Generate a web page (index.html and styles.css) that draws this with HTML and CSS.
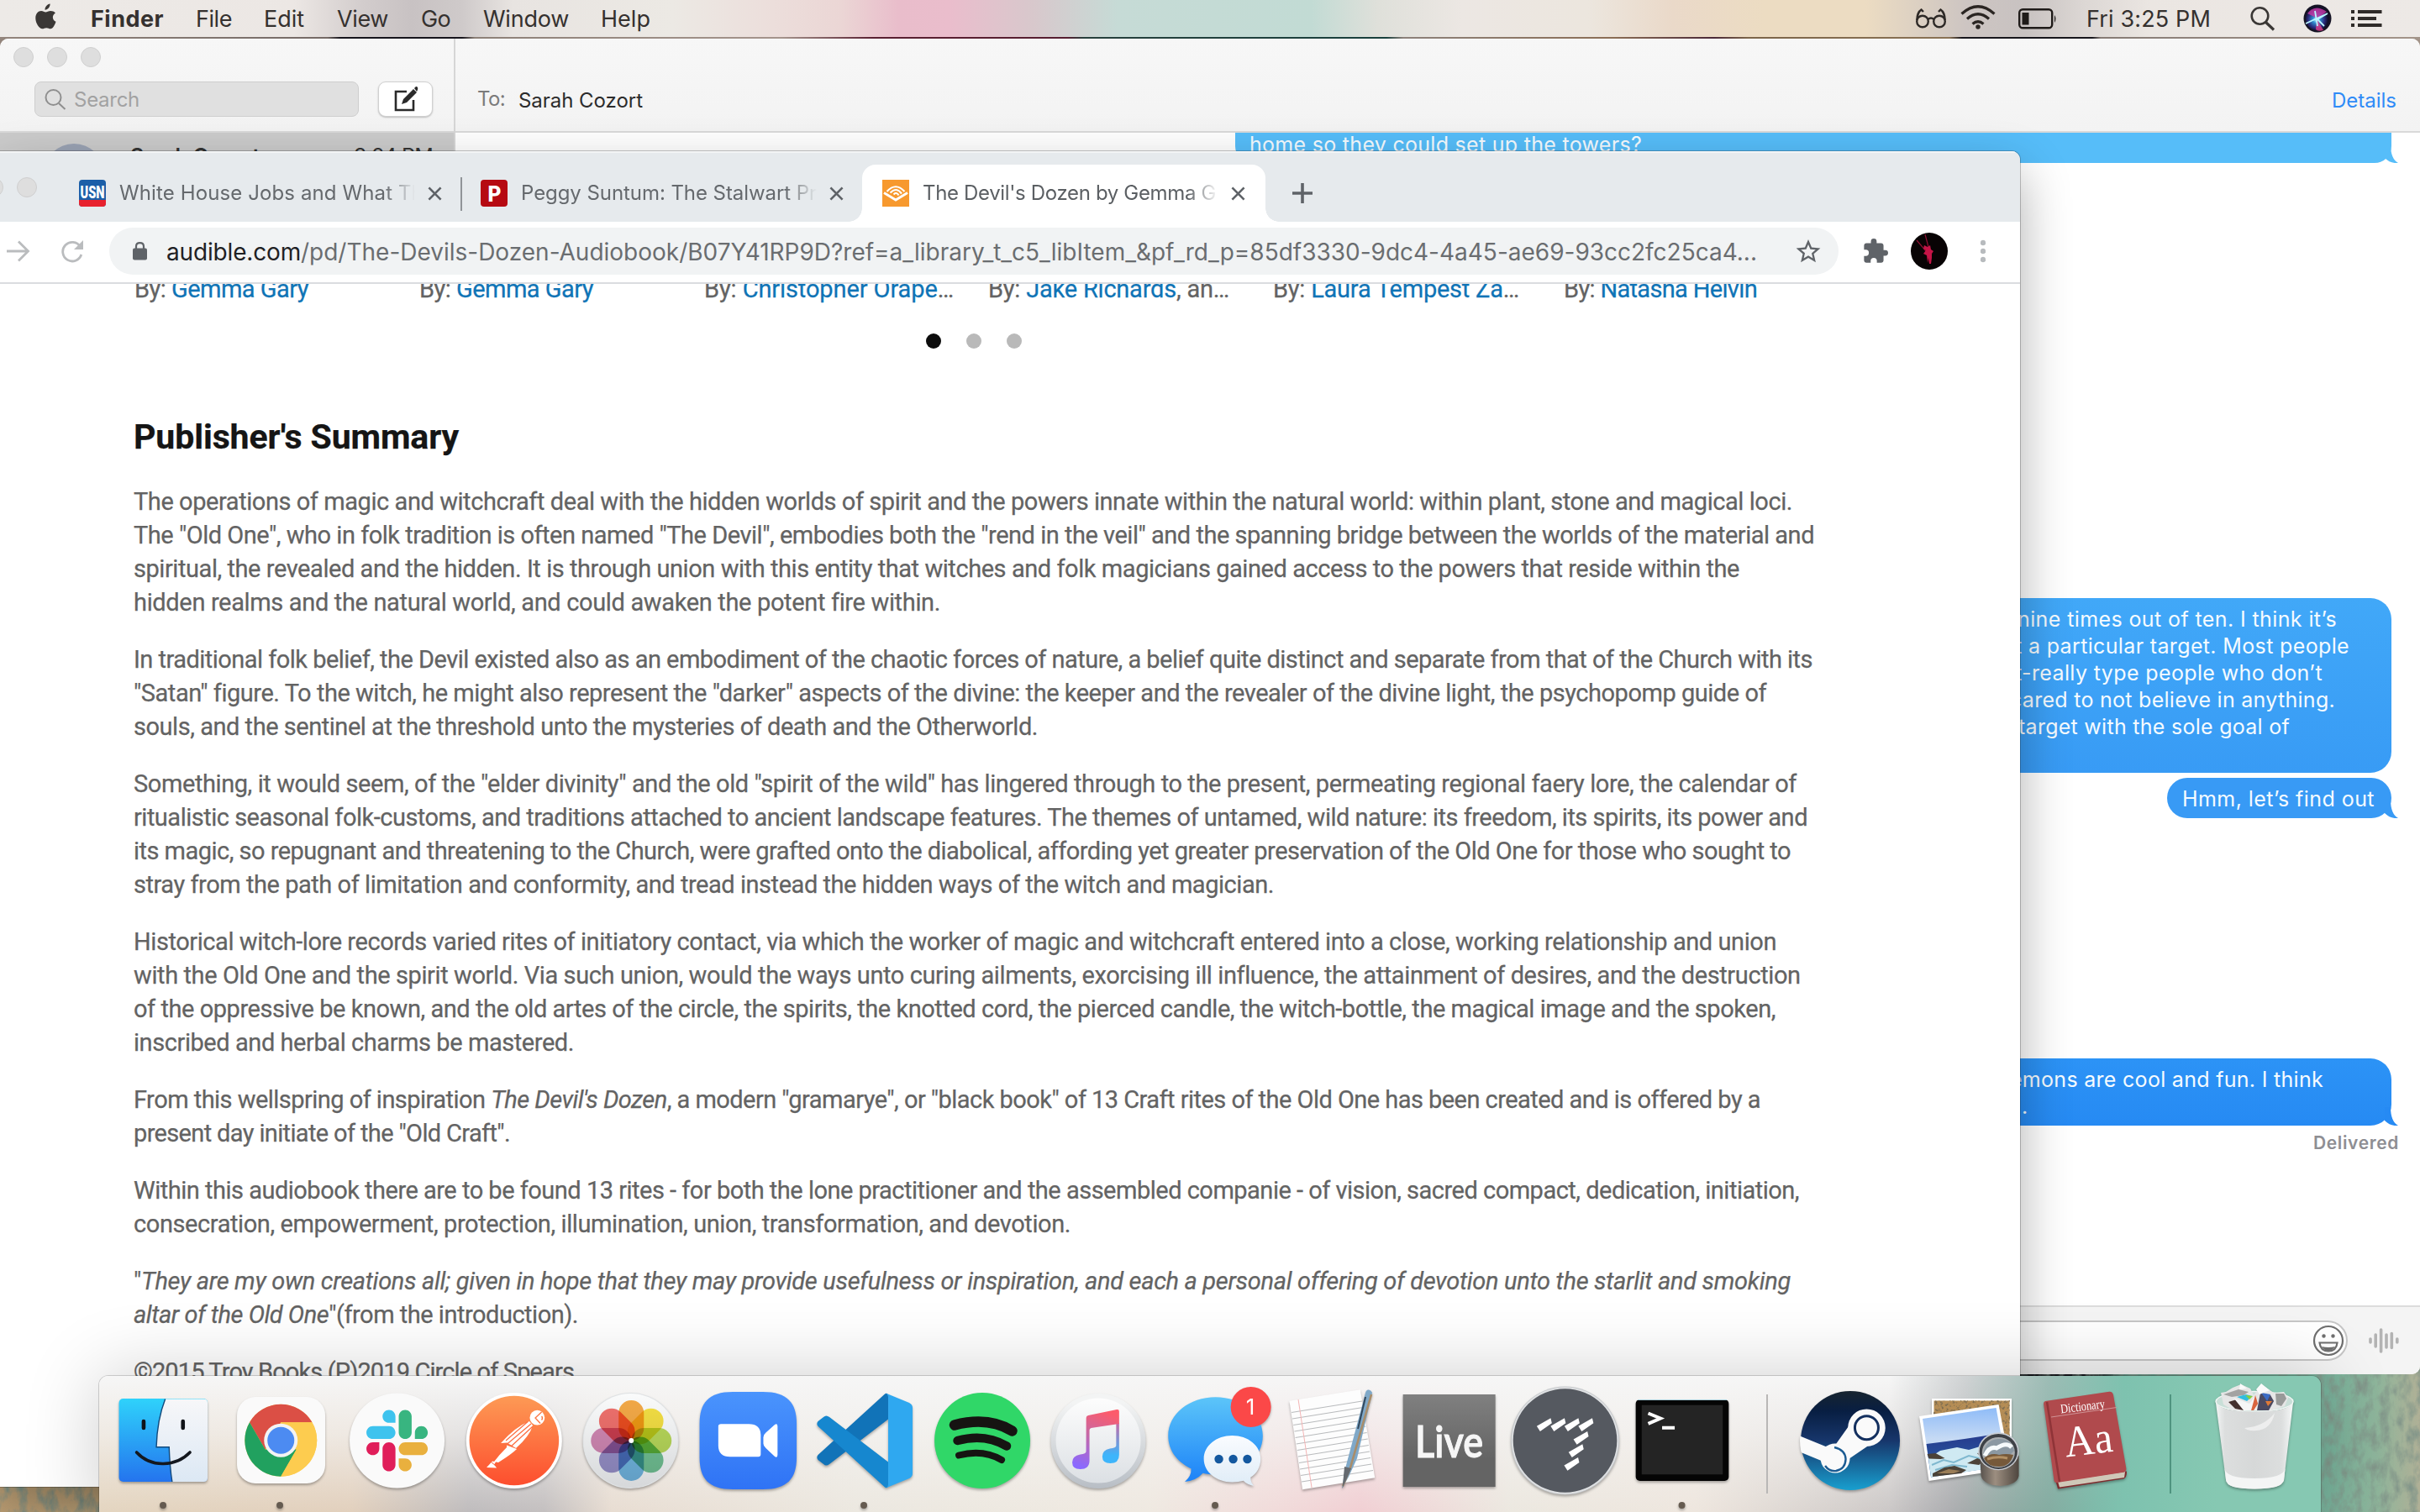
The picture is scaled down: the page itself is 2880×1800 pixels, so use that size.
FILE: index.html
```html
<!DOCTYPE html>
<html lang="en">
<head>
<meta charset="utf-8">
<title>Desktop</title>
<link rel="stylesheet" href="styles.css">
</head>
<body>
<div class="desktop">
  <svg class="grain" width="2880" height="180"><filter id="grain"><feTurbulence type="fractalNoise" baseFrequency=".09 .05" numOctaves="4" seed="4"/><feColorMatrix values="0 0 0 0 .22  0 0 0 0 .3  0 0 0 0 .25  2.200 0 0 0 -.85"/></filter><rect width="2880" height="180" filter="url(#grain)"/></svg>

  <header class="menubar">
    <svg class="apple" viewBox="0 0 26 32"><path fill="#3a3735" d="M18.3 0c.3 3.800-2.900 7.600-6.300 7.400C11.700 3.900 15 .3 18.300 0zM24.900 11.200c-2 1.300-3.200 3-3.200 5.200 0 2.600 1.500 4.600 3.800 5.600-1 3.200-3.600 8.900-6.700 8.900-1.800 0-2.700-1.200-5-1.200s-3.300 1.200-5 1.200C4.600 30.900.3 23.500.3 17.600c0-5.500 3.400-8.800 7-8.800 2.300 0 4 1.500 5.500 1.500 1.400 0 3.500-1.600 6.300-1.600 2 0 4.300.8 5.800 2.500z"/></svg>
    <nav class="menus">
      <b><span data-width="87">Finder</span></b><span class="m"><span data-width="43">File</span></span><span class="m"><span data-width="48">Edit</span></span><span class="m"><span data-width="61">View</span></span><span class="m"><span data-width="35">Go</span></span><span class="m"><span data-width="102">Window</span></span><span class="m"><span data-width="59">Help</span></span>
    </nav>
    <div class="status">
      <svg width="38" height="24" viewBox="0 0 38 24" fill="none" stroke="#2d2926" stroke-width="2.400"><circle cx="9" cy="15.500" r="6.800"/><circle cx="29" cy="15.500" r="6.800"/><path d="M15.500 13q3.500-3 7 0M2.300 14C2.500 8 5 3 7.500 1.500L10 4M35.700 14C35.500 8 33 3 30.500 1.500L28 4"/></svg>
      <svg width="42" height="30" viewBox="0 0 42 30" fill="none" stroke="#2a2522" stroke-width="3.200"><path d="M1.500 10.500Q21-7 40.500 10.500M8 16.500Q21 5 34 16.500M14.500 22.500Q21 17 27.500 22.500"/><circle cx="21" cy="26" r="2" fill="#2a2522" stroke-width="1.500"/></svg>
      <svg width="46" height="26" viewBox="0 0 46 26"><rect x="1.200" y="2.200" width="39" height="22" rx="4" fill="none" stroke="#1f1b19" stroke-width="2.400"/><rect x="4.500" y="6" width="8" height="14.500" fill="#1f1b19"/><path d="M43 9q3 4 0 9z" fill="#1f1b19"/></svg>
      <span class="m clock"><span data-width="148">Fri 3:25 PM</span></span>
      <svg width="30" height="30" viewBox="0 0 30 30" fill="none" stroke="#3a3735" stroke-width="2.600"><circle cx="11.500" cy="12" r="9.800"/><path d="M18.500 19.500l9.500 9" stroke-width="3.200"/></svg>
      <svg width="34" height="34" viewBox="0 0 34 34"><defs><radialGradient id="siri" cx=".45" cy=".55"><stop offset="0" stop-color="#d9fbff"/><stop offset=".3" stop-color="#2f8fd0"/><stop offset=".7" stop-color="#2b2c7e"/><stop offset="1" stop-color="#100e28"/></radialGradient></defs><circle cx="17" cy="17" r="16.500" fill="#151324"/><circle cx="17" cy="17" r="14" fill="url(#siri)"/><path d="M5 11Q14-1 28 9L17 17z" fill="#c93aa5" opacity=".8"/><path d="M16 17L24 31q-7 2-9-1z" fill="#e23f8d" opacity=".8"/><path d="M3 23L29 11 17 18l8 8M14 8l3 18" stroke="#b9f6ff" stroke-width="1.800" fill="none"/></svg>
      <svg width="37" height="22" viewBox="0 0 37 22" fill="#2f2b29"><path d="M0 1h4v4H0zM8 1h28.500v4H8zM0 9h4v4H0zM8 9h22v4H8zM0 17h4v4H0zM8 17h28.500v4H8z"/></svg>
    </div>
  </header>
  <div class="sliver"></div>

  <section class="messages">
    <aside class="sidebar">
      <div class="side-head">
        <div class="lights"><i></i><i></i><i></i></div>
        <div class="tools">
          <div class="search"><svg width="26" height="26" viewBox="0 0 26 26" fill="none" stroke="#8f8f8f" stroke-width="2"><circle cx="10.500" cy="11" r="9"/><path d="M17 18l7.500 7"/></svg><span data-width="78">Search</span></div>
          <div class="compose"><svg width="32" height="32" viewBox="0 0 32 32"><path d="M17 7H4v22h21V17" fill="none" stroke="#2a2a2a" stroke-width="2.600"/><path d="M11 22l2-6L25 4l4 4-12 12zM26 3l2-2q3 0 2 4l-1 2z" fill="#2a2a2a"/></svg></div>
        </div>
      </div>
      <div class="thread"><i class="face"></i><span class="who" data-width="154">Sarah Cozort</span><span class="when" data-width="94">3:24 PM</span></div>
    </aside>
    <div class="conversation">
      <div class="to-bar"><span class="to" data-width="33">To:</span><span class="name" data-width="148">Sarah Cozort</span><span class="details" data-width="77">Details</span></div>
      <div class="transcript">
        <div class="bubble first"><p><span data-width="467">home so they could set up the towers?</span></p><svg class="tail" viewBox="0 0 24 22"><path d="M15 0q0 17 9 22-9 1-16-6L8 0z"/></svg></div>
        <div class="bubble second"><p class="i9"><span data-width="380">nine times out of ten. I think it’s</span></p><p class="i5"><span data-width="398">t a particular target. Most people</span></p><p class="i5"><span data-width="366">t-really type people who don’t</span></p><p><span data-width="387">cared to not believe in anything.</span></p><p class="i10"><span data-width="323">target with the sole goal of</span></p></div>
        <div class="bubble third"><p><span data-width="229">Hmm, let’s find out</span></p><svg class="tail" viewBox="0 0 24 22"><path d="M15 0q0 17 9 22-9 1-16-6L8 0z"/></svg></div>
        <div class="bubble fourth"><p><span data-width="373">emons are cool and fun. I think</span></p><p class="i14">.</p><svg class="tail" viewBox="0 0 24 22"><path d="M15 0q0 17 9 22-9 1-16-6L8 0z"/></svg></div>
        <p class="delivered"><span data-width="102">Delivered</span></p>
      </div>
      <div class="compose-bar"><div class="field"><svg width="38" height="38" viewBox="0 0 38 38" fill="none" stroke="#6f6f6f" stroke-width="2.200"><circle cx="19" cy="19" r="17"/><path d="M8.500 21.500h21q-1 10-10.500 10t-10.500-10z"/><path d="M11 26q8 2 16 0-3 5-8 5t-8-5z" fill="#6f6f6f" stroke="none"/><circle cx="13.500" cy="13.500" r="2.200" fill="#6f6f6f" stroke="none"/><circle cx="24.500" cy="13.500" r="2.200" fill="#6f6f6f" stroke="none"/></svg></div>
        <svg class="wave" width="36" height="32" viewBox="0 0 36 32" stroke="#b3b3b3" stroke-width="3.600" stroke-linecap="round"><path d="M2 14v4M8.200 9v14M14.600 3v26M21 9v15M27.300 7.500v17M33.800 14v4"/></svg></div>
    </div>
  </section>

  <section class="browser">
    <div class="tabstrip">
      <div class="blights"><i></i><i></i></div>
      <div class="tab t1"><svg class="fav" viewBox="0 0 32 32"><rect width="32" height="32" rx="4" fill="#1c5fa8"/><path d="M0 24h32v4q0 4-4 4H4q-4 0-4-4z" fill="#e8222e"/><text x="1.500" y="21.500" textLength="29" lengthAdjust="spacingAndGlyphs" font-family="Roboto" font-weight="900" font-size="21" fill="#fff">USN</text></svg><span class="title"><span data-width="376">White House Jobs and What The</span></span><svg class="x" viewBox="0 0 18 18"><path d="M1.500 1.500l15 15m0-15l-15 15"/></svg></div>
      <i class="sep"></i>
      <div class="tab t2"><svg class="fav" viewBox="0 0 32 32"><rect width="32" height="32" rx="4" fill="#b60a12"/><text x="8.500" y="26" font-family="Roboto" font-weight="900" font-size="26" textLength="16" lengthAdjust="spacingAndGlyphs" fill="#fff">P</text></svg><span class="title"><span data-width="352">Peggy Suntum: The Stalwart Pr</span></span><svg class="x" viewBox="0 0 18 18"><path d="M1.500 1.500l15 15m0-15l-15 15"/></svg></div>
      <div class="tab active"><svg class="fav" viewBox="0 0 32 32"><rect width="32" height="32" fill="#f7992e"/><g fill="none" stroke="#fff" stroke-width="2.200"><path d="M2 15.500l14 8.500 14-8.500" stroke-width="2.800"/><path d="M5.500 14Q16 2.500 26.500 14M9.500 15.500Q17 8 23 16.500M13.500 17.500Q17 14 19.500 18.500"/></g></svg><span class="title"><span data-width="349">The Devil's Dozen by Gemma G</span></span><svg class="x" viewBox="0 0 18 18"><path d="M1.500 1.500l15 15m0-15l-15 15"/></svg></div>
      <svg class="plus" viewBox="0 0 24 24"><path d="M12 0v24M0 12h24"/></svg>
    </div>
    <div class="toolbar">
      <svg class="fwd" width="28" height="26" viewBox="0 0 28 26" fill="none" stroke="#babcbe" stroke-width="2.800"><path d="M0 13h25M14 1.500L25.500 13 14 24.500"/></svg>
      <svg class="reload" width="28" height="28" viewBox="0 0 28 28"><path d="M23.500 8.500A11.300 11.300 0 1 0 24.800 18" fill="none" stroke="#babcbe" stroke-width="2.800"/><path d="M27 1v11H16z" fill="#babcbe"/></svg>
      <div class="omnibox">
        <svg width="17" height="22" viewBox="0 0 17 22"><rect y="7.500" width="17" height="14" rx="2" fill="#5f6368"/><path d="M4 8V5.500q0-4.300 4.500-4.300T13 5.500V8" fill="none" stroke="#5f6368" stroke-width="2.200"/></svg>
        <span class="url"><span class="host" data-width="160">audible.com</span><span data-width="1733">/pd/The-Devils-Dozen-Audiobook/B07Y41RP9D?ref=a_library_t_c5_libItem_&amp;pf_rd_p=85df3330-9dc4-4a45-ae69-93cc2fc25ca4...</span></span>
        <svg class="star" width="30" height="30" viewBox="0 0 24 24"><path fill="#5f6368" d="M22 9.240l-7.190-.62L12 2 9.190 8.630 2 9.240l5.460 4.730L5.820 21 12 17.270 18.180 21l-1.630-7.030L22 9.240zM12 15.400l-3.760 2.270 1-4.280-3.320-2.880 4.380-.38L12 6.100l1.710 4.040 4.380.38-3.320 2.880 1 4.280L12 15.400z" transform="translate(-1.800 -1.500) scale(1.150)"/></svg>
      </div>
      <svg class="puzzle" width="30" height="30" viewBox="0 0 22 22"><path fill="#5f6368" d="M19.500 10H18V6c0-1.100-.9-2-2-2h-4V2.500a2.500 2.500 0 0 0-5 0V4H3c-1.100 0-2 .9-2 2v3.800h1.500a2.700 2.700 0 0 1 0 5.400H1V19c0 1.100.9 2 2 2h3.800v-1.500a2.700 2.700 0 0 1 5.400 0V21H16c1.100 0 2-.9 2-2v-4h1.500a2.500 2.500 0 0 0 0-5z"/></svg>
      <svg class="avatar" width="44" height="44" viewBox="0 0 44 44"><circle cx="22" cy="22" r="22" fill="#080304"/><path d="M7 9l11 13M17 2l4 15" stroke="#8e1033" stroke-width="1.200"/><path d="M16 15l4 2 3-2 1 5 3 2-2 3v5l-1 7h-2l-1-7-1 6-1-9-4-2 3-4-3-2z" fill="#c41446"/></svg>
      <svg class="dots3" width="6" height="28" viewBox="0 0 6 28" fill="#b8bbbe"><circle cx="3" cy="4" r="3.200"/><circle cx="3" cy="14" r="3.200"/><circle cx="3" cy="24" r="3.200"/></svg>
    </div>
    <div class="page">
      <div class="authors">
        <div><span data-width="207">By: <a>Gemma Gary</a></span></div><div><span data-width="207">By: <a>Gemma Gary</a></span></div><div><span data-width="297">By: <a>Christopher Orape</a>…</span></div><div><span data-width="287">By: <a>Jake Richards</a>, an…</span></div><div><span data-width="293">By: <a>Laura Tempest Za</a>…</span></div><div><span data-width="230">By: <a>Natasha Helvin</a></span></div>
      </div>
      <div class="pager"><i class="on"></i><i></i><i></i></div>
      <h2><span data-width="387">Publisher's Summary</span></h2>
      <div class="summary">
        <p><span data-width="1974">The operations of magic and witchcraft deal with the hidden worlds of spirit and the powers innate within the natural world: within plant, stone and magical loci.</span><span data-width="2000">The "Old One", who in folk tradition is often named "The Devil", embodies both the "rend in the veil" and the spanning bridge between the worlds of the material and</span><span data-width="1911">spiritual, the revealed and the hidden. It is through union with this entity that witches and folk magicians gained access to the powers that reside within the</span><span data-width="959">hidden realms and the natural world, and could awaken the potent fire within.</span></p>
        <p><span data-width="1998">In traditional folk belief, the Devil existed also as an embodiment of the chaotic forces of nature, a belief quite distinct and separate from that of the Church with its</span><span data-width="1942">"Satan" figure. To the witch, he might also represent the "darker" aspects of the divine: the keeper and the revealer of the divine light, the psychopomp guide of</span><span data-width="1076">souls, and the sentinel at the threshold unto the mysteries of death and the Otherworld.</span></p>
        <p><span data-width="1979">Something, it would seem, of the "elder divinity" and the old "spirit of the wild" has lingered through to the present, permeating regional faery lore, the calendar of</span><span data-width="1992">ritualistic seasonal folk-customs, and traditions attached to ancient landscape features. The themes of untamed, wild nature: its freedom, its spirits, its power and</span><span data-width="1972">its magic, so repugnant and threatening to the Church, were grafted onto the diabolical, affording yet greater preservation of the Old One for those who sought to</span><span data-width="1357">stray from the path of limitation and conformity, and tread instead the hidden ways of the witch and magician.</span></p>
        <p><span data-width="1955">Historical witch-lore records varied rites of initiatory contact, via which the worker of magic and witchcraft entered into a close, working relationship and union</span><span data-width="1983">with the Old One and the spirit world. Via such union, would the ways unto curing ailments, exorcising ill influence, the attainment of desires, and the destruction</span><span data-width="1954">of the oppressive be known, and the old artes of the circle, the spirits, the knotted cord, the pierced candle, the witch-bottle, the magical image and the spoken,</span><span data-width="524">inscribed and herbal charms be mastered.</span></p>
        <p><span data-width="1936">From this wellspring of inspiration <em>The Devil's Dozen</em>, a modern "gramarye", or "black book" of 13 Craft rites of the Old One has been created and is offered by a</span><span data-width="448">present day initiate of the "Old Craft".</span></p>
        <p><span data-width="1982">Within this audiobook there are to be found 13 rites - for both the lone practitioner and the assembled companie - of vision, sacred compact, dedication, initiation,</span><span data-width="1115">consecration, empowerment, protection, illumination, union, transformation, and devotion.</span></p>
        <p><span data-width="1972">"<em>They are my own creations all; given in hope that they may provide usefulness or inspiration, and each a personal offering of devotion unto the starlit and smoking</em></span><span data-width="529"><em>altar of the Old One</em>"(from the introduction).</span></p>
        <p><span data-width="524">©2015 Troy Books (P)2019 Circle of Spears</span></p>
      </div>
    </div>
  </section>

  <footer class="dock">
    <!-- Finder -->
    <svg class="app" viewBox="0 0 139 162"><defs><linearGradient id="fb" x2="0" y2="1"><stop stop-color="#2fd2fb"/><stop offset="1" stop-color="#2474ee"/></linearGradient><linearGradient id="fw" x2="0" y2="1"><stop stop-color="#f7f7f9"/><stop offset="1" stop-color="#dce8f4"/></linearGradient></defs><rect x="16.500" y="27" width="105.500" height="99" rx="5" fill="url(#fb)"/><path d="M71.600 27.500H117q5 0 5 5V121q0 5-5 5H79.800Q77 108 76.200 84.700H61Q62 52 71.600 27.500z" fill="url(#fw)"/><path d="M71.600 27.500Q62 52 61 84.700h15.200Q77 108 79.800 126" fill="none" stroke="#124a7c" stroke-width="1.400"/><path d="M45.900 54v8M92.700 54v8" stroke="#101318" stroke-width="4.600" stroke-linecap="round"/><path d="M37.500 91q13 14 32 13.500T101 91" fill="none" stroke="#14181e" stroke-width="3.600" stroke-linecap="round"/><circle class="run" cx="69" cy="154" r="4"/></svg>
    <!-- Chrome -->
    <svg class="app" viewBox="0 0 139 162"><rect x="18" y="25" width="105" height="103" rx="22" fill="#fafafa"/><g transform="translate(70.200 76.700)"><circle r="43" fill="#fdcc4f"/><path d="M-37.200-21.500A43 43 0 0 1 37.200-21.500H0L-18.600 10.700z" fill="#db4f45"/><path d="M-37.200-21.500A43 43 0 0 0 0 43L18.600 10.700-18.600 10.700z" fill="#21a15f"/><path d="M37.200-21.500A43 43 0 0 1 0 43L18.600 10.700 0-19.500V-21.500z" fill="#fdcc4f"/><circle r="20" fill="#f3f3f3"/><circle r="16" fill="#4c8bf2"/></g><circle class="run" cx="69" cy="154" r="4"/></svg>
    <!-- Slack -->
    <svg class="app" viewBox="0 0 139 162"><circle cx="69.500" cy="77" r="56.500" fill="#fafafa"/><g transform="translate(33 40.500) scale(.595)"><path d="M25.800 77.600c0 7.100-5.800 12.900-12.900 12.900S0 84.700 0 77.600s5.800-12.900 12.900-12.900h12.900v12.900zm6.500 0c0-7.100 5.800-12.900 12.900-12.900s12.900 5.800 12.900 12.900v32.300c0 7.100-5.800 12.900-12.900 12.900s-12.900-5.800-12.900-12.900V77.600z" fill="#e01e5a"/><path d="M45.200 25.800c-7.100 0-12.900-5.800-12.900-12.900S38.100 0 45.200 0s12.900 5.800 12.900 12.900v12.900H45.200zm0 6.500c7.100 0 12.900 5.800 12.900 12.900s-5.800 12.900-12.900 12.900H12.900C5.800 58.100 0 52.300 0 45.200s5.800-12.900 12.900-12.900h32.300z" fill="#3ec3ee"/><path d="M97 45.200c0-7.100 5.800-12.900 12.900-12.900s12.900 5.800 12.900 12.900-5.800 12.900-12.900 12.900H97V45.200zm-6.500 0c0 7.100-5.800 12.900-12.900 12.900s-12.900-5.800-12.900-12.900V12.900C64.700 5.800 70.500 0 77.600 0s12.900 5.800 12.900 12.900v32.300z" fill="#38b580"/><path d="M77.600 97c7.100 0 12.900 5.800 12.900 12.900s-5.800 12.900-12.900 12.900-12.900-5.800-12.900-12.900V97h12.900zm0-6.500c-7.100 0-12.900-5.800-12.900-12.900s5.800-12.900 12.900-12.900h32.300c7.100 0 12.900 5.800 12.900 12.900s-5.800 12.900-12.900 12.900H77.600z" fill="#e9b03e"/></g></svg>
    <!-- Postman -->
    <svg class="app" viewBox="0 0 139 162"><defs><linearGradient id="pm" x2="0" y2="1"><stop stop-color="#fd9a55"/><stop offset="1" stop-color="#fd4e2e"/></linearGradient></defs><circle cx="69.800" cy="77" r="57" fill="#fff"/><circle cx="69.800" cy="77" r="53.300" fill="url(#pm)"/><circle cx="97.300" cy="49.700" r="8.900" fill="#fff"/><path d="M102.500 43l-7.500 7 6 6.500M102.500 48q2 2 0 4.500" fill="none" stroke="#fc7846" stroke-width="1.400"/><path d="M88 54Q72 60 54 80l7.500-.5L72 86q16-14 20-27z" fill="#fff"/><path d="M90 57L61 81.500M86 54.500L60 77M92 60L66 84" stroke="#fc6c40" stroke-width="1.200"/><path d="M61 82.500l12 4.500q-6 6-22 16l-5-1q6-8 15-17zM44 101.500l-7 7.500 12 .5-3-4 2-3z" fill="#fff"/><path d="M43 103l5 4" stroke="#fc5a36"/></svg>
    <!-- Photos -->
    <svg class="app" viewBox="0 0 139 162"><defs><linearGradient id="ph" x2="0" y2="1"><stop stop-color="#fafbfb"/><stop offset="1" stop-color="#d6d8da"/></linearGradient></defs><circle cx="69.500" cy="77" r="57" fill="#dfe2e4"/><circle cx="69.500" cy="77" r="56" fill="url(#ph)"/><g class="petals" transform="translate(70.200 77)"><rect x="-15" y="-48" width="30" height="48" rx="15" fill="#f8a83e"/><rect x="-15" y="-48" width="30" height="48" rx="15" fill="#f8e13a" transform="rotate(45)"/><rect x="-15" y="-48" width="30" height="48" rx="15" fill="#b9da52" transform="rotate(90)"/><rect x="-15" y="-48" width="30" height="48" rx="15" fill="#6cc290" transform="rotate(135)"/><rect x="-15" y="-48" width="30" height="48" rx="15" fill="#6cb6e4" transform="rotate(180)"/><rect x="-15" y="-48" width="30" height="48" rx="15" fill="#968dca" transform="rotate(225)"/><rect x="-15" y="-48" width="30" height="48" rx="15" fill="#d484b2" transform="rotate(270)"/><rect x="-15" y="-48" width="30" height="48" rx="15" fill="#f46a66" transform="rotate(315)"/></g><circle cx="70.200" cy="77" r="3" fill="#fff"/></svg>
    <!-- Zoom -->
    <svg class="app" viewBox="0 0 139 162"><defs><linearGradient id="zm" x2="0" y2="1"><stop stop-color="#4a94fd"/><stop offset="1" stop-color="#2f73f5"/></linearGradient></defs><path d="M52 19h36c29 0 40 13 40 38v40c0 25-11 38-40 38H52c-29 0-39.500-13-39.500-38V57c0-25 10.500-38 39.500-38z" fill="url(#zm)"/><path d="M38 57.300h33q14 0 14.300 13v23q0 3-3 3H49q-14 0-14.200-13V60q0-2.700 3.200-2.700zM88.400 73q0-3 3-5.500L102 58q3.300-2 3.300 2v34q0 4-3.300 2L91.400 86q-3-2.500-3-5.500z" fill="#fff"/></svg>
    <!-- VS Code -->
    <svg class="app" viewBox="0 0 139 162"><path d="M93 21.500q2.500-2 4 1v29L27 105q-4 3-7 0l-6.500-5q-2.500-3 0-6z" fill="#1173b8"/><path d="M93 132.500q2.500 2 4-1v-29L27 49q-4-3-7 0l-6.500 5q-2.500 3 0 6z" fill="#1687cf"/><path d="M94 20.500l28 11.500q4 2 4 6v78q0 4-4 6l-28 11.500q3-1 3-5V26q0-4-3-5.500z" fill="#2fa8f0"/><circle class="run" cx="68" cy="154" r="4"/></svg>
    <!-- Spotify -->
    <svg class="app" viewBox="0 0 139 162"><circle cx="70" cy="77" r="57" fill="#30d768"/><g fill="none" stroke="#161412" stroke-linecap="round"><path d="M37 58.500Q77 48 105.500 65.500" stroke-width="12.500"/><path d="M40.500 77Q73 68 99 83.500" stroke-width="10.500"/><path d="M42 94.500Q71 87 93 100" stroke-width="8"/></g></svg>
    <!-- Music -->
    <svg class="app" viewBox="0 0 139 162"><defs><linearGradient id="mu" x1=".6" x2=".3" y2="1"><stop stop-color="#fc5b6b"/><stop offset=".45" stop-color="#c768a5"/><stop offset="1" stop-color="#8a68ff"/></linearGradient><linearGradient id="mw" x2="0" y2="1"><stop stop-color="#fdfdfd"/><stop offset="1" stop-color="#dce0e4"/></linearGradient><linearGradient id="mr" x2="0" y2="1"><stop offset=".1" stop-color="#f3f4f4"/><stop offset="1" stop-color="#b8bec5"/></linearGradient><linearGradient id="mb" x2="0" y2="1"><stop stop-color="#c768a5"/><stop offset=".8" stop-color="#3eb5fb"/></linearGradient></defs><circle cx="69" cy="77.500" r="56.500" fill="url(#mr)"/><circle cx="69" cy="77" r="50.500" fill="url(#mw)"/><path d="M90.300 56h3.500v38q0 10-10.500 10-9.500 0-9.500-8 0-8 9-9.500 7.500-1 7.500-3.500z" fill="url(#mb)"/><path d="M54.600 50q0-2.500 2.500-3L91 40q2.800-.5 2.800 2v15l-3.500.5L60.500 62q-2 .5-2 2.500V101q0 10-11 10-9.500 0-9.500-8t9.500-9.500q7-1 7-3.500z" fill="url(#mu)"/></svg>
    <!-- Messages -->
    <svg class="app" viewBox="0 0 139 162"><defs><linearGradient id="ms" x2="0" y2="1"><stop stop-color="#5cc5f9"/><stop offset="1" stop-color="#1c82f8"/></linearGradient><linearGradient id="mt" x2="0" y2="1"><stop stop-color="#fafcff"/><stop offset="1" stop-color="#dfecf7"/></linearGradient></defs><path d="M69.500 25.300c31 0 56.300 20 56.300 46s-25.300 46-56.300 46q-9 0-15-1.500-8 9-21.500 10.200 8-7 7.500-15.500C23 102 13.200 88 13.200 71.300c0-26 25.300-46 56.300-46z" fill="url(#ms)"/><path d="M89.400 71c18.700 0 33.800 12 33.800 27.700 0 10-5 18-12 22 0 5 2 8 4 10q-8-1-12.500-6-6 1.700-13.300 1.700c-18.700 0-33.800-12-33.800-27.700S70.700 71 89.400 71z" fill="url(#mt)"/><g fill="#14589f"><circle cx="73.500" cy="99" r="5.200"/><circle cx="90.500" cy="99" r="5.200"/><circle cx="107.400" cy="99" r="5.200"/></g><circle cx="111.600" cy="37" r="24" fill="#fb4848"/><text x="111" y="46" text-anchor="middle" font-family="Inter" font-size="26" fill="#fff">1</text><circle class="run" cx="69" cy="154" r="4"/></svg>
    <!-- TextEdit -->
    <svg class="app" viewBox="0 0 139 162"><path d="M18.400 29.700l84.400-13.400 17.400 105L34 135.300z" fill="#fdfdfd"/><path d="M21 43.500l84-13.500M22 51l84-13.500M23.200 58.500l84-13.500M24.400 66l84-13.500M25.500 73.500l84-13.500M26.600 81l84-13.500M27.700 88.500l84-13.500M28.800 96l84-13.500M30 103.500l84-13.500M31 111l84-13.500M32 118.500l84-13.500M33 126l85-13.500" stroke="#b9bbbd" stroke-width="1.100"/><path d="M29 28l16 105" stroke="#f4b5b5"/><path d="M109 20q1-4 4-3.500t4 3.500l-18 78-10 22-8 14 4-24z" fill="#7fa8c8"/><path d="M116 22L91 109l-9 22" fill="none" stroke="#a98d6a" stroke-width="2.600"/><path d="M109 25l-9 38" stroke="#31475c" stroke-width="2"/><path d="M84 108l8 2-10.500 24z" fill="#656a70"/></svg>
    <!-- Live -->
    <svg class="app" viewBox="0 0 139 162"><defs><linearGradient id="lv" x2="0" y2="1"><stop stop-color="#808080"/><stop offset=".7" stop-color="#646464"/></linearGradient></defs><rect x="14.600" y="22" width="110" height="110" fill="url(#lv)"/><text x="29" y="96.500" font-family="Lato" font-size="52" font-weight="600" textLength="81" lengthAdjust="spacingAndGlyphs" fill="#f6f6f6" stroke="#f6f6f6">Live</text></svg>
    <!-- Launcher -->
    <svg class="app" viewBox="0 0 139 162"><circle cx="68.500" cy="77" r="64.500" fill="#c5c8cb"/><circle cx="68.500" cy="77" r="63.500" fill="#e0e2e4"/><circle cx="68.500" cy="77" r="61.800" fill="#555960"/><path fill="#fff" d="M34.800 59.700l16.600-9.400 1.400 6-14 9.700zM51.300 59.700l16.600-9.400 1.400 6-14 9.700zM67.800 59.700l16.600-9.400 1.400 6-14 9.700zM84.300 59.700l16.600-9.400 1.400 6-14 9.700zM78.500 75.400l16.600-9.400 1.400 6-14 9.700zM72.700 90.700l16.600-9.400 1.400 6-14 9.700zM67.400 106.400L84 97l1.400 6-14 9.700z"/></svg>
    <!-- Terminal -->
    <svg class="app" viewBox="0 0 139 162"><rect x="13.600" y="28" width="110.700" height="97" rx="5" fill="#050505"/><path d="M16 28.500h106" stroke="#a9cfdc"/><rect x="20.700" y="34.700" width="96.500" height="82.600" fill="#242424"/><g fill="none" stroke="#fff" stroke-width="4"><path d="M28.500 44.500L43 50.500 28.500 56.800M45 61.800h15"/></g><circle class="run" cx="68.500" cy="154" r="4"/></svg>
    <i class="divider"></i>
    <!-- Steam -->
    <svg class="app" viewBox="0 0 139 162"><defs><linearGradient id="st" x2="0" y2="1"><stop stop-color="#17242f"/><stop offset=".2" stop-color="#081e42"/><stop offset=".5" stop-color="#17366b"/><stop offset="1" stop-color="#189fcf"/></linearGradient><clipPath id="sc"><circle cx="68" cy="77" r="59"/></clipPath></defs><circle cx="68" cy="77" r="59" fill="url(#st)"/><g clip-path="url(#sc)" transform="translate(-1 0)"><path d="M8 71l34 14 10-4 17-24 20 27-22 15-3 9-27-6L8 90z" fill="#fafafa"/><circle cx="88.400" cy="61.700" r="22.300" fill="#fafafa"/><circle cx="88.400" cy="61.700" r="14" fill="none" stroke="#14305f" stroke-width="3"/><circle cx="51" cy="98" r="17.500" fill="#fafafa"/><path d="M39 107q5 7 13 6 11-2 11.500-14Q63 88 50 85" fill="none" stroke="#1b5b92" stroke-width="2.400"/></g></svg>
    <!-- Preview -->
    <svg class="app" viewBox="0 0 139 162"><defs><linearGradient id="sea" x2="0" y2="1"><stop stop-color="#8fbcf8"/><stop offset=".45" stop-color="#c6daf4"/><stop offset="1" stop-color="#c6daf4"/></linearGradient><linearGradient id="water" x2="0" y2="1"><stop stop-color="#26388c"/><stop offset="1" stop-color="#2a66a8"/></linearGradient><linearGradient id="loupe" x2="1"><stop stop-color="#55504c"/><stop offset=".4" stop-color="#9c8e80"/><stop offset="1" stop-color="#4e463f"/></linearGradient><filter id="sand" x="0" y="0" width="1" height="1"><feTurbulence type="fractalNoise" baseFrequency=".3" numOctaves="2"/><feColorMatrix values="0 0 0 0 .2  0 0 0 0 .15  0 0 0 0 .08  4 0 0 0 -2"/></filter></defs><path d="M26 27h95v70H26z" fill="#fff"/><path d="M28.500 29.500h90v60h-90z" fill="#b58d55"/><rect x="28.500" y="29.500" width="90" height="60" filter="url(#sand)"/><path d="M11 48l94.500-14L120 110.500l-97.500 14.500z" fill="#fff"/><path d="M15 51l87.500-13L115 106.500l-90 14z" fill="url(#sea)"/><path d="M19.500 81Q62 76 109 68l6 38.500-90 14z" fill="url(#water)"/><path d="M22 98l14-9 20-4 14 3 20-6 21 0 4 25-90 13.500z" fill="#cfe9f2"/><path d="M26 106l14-6 12 3 18-8 16 4 20-5M30 112l20-6 18 2" stroke="#7fb8cf" stroke-width="2" fill="none"/><path d="M20.500 93l10-1 11 6-5 1-14-.5zM27 116l14-7 12-2 14 5-6 4-34 4zM80 92l16-3 6 4-18 4zM68 104l12-6 8 3-6 5z" fill="#4b4238"/><path d="M32 116l14-5 14 2-8 3z" fill="#9a7d57"/><path d="M83 95h46.500v24q-2 11-22 12-20-1-23-12z" fill="url(#loupe)"/><ellipse cx="105.300" cy="89.700" rx="24.300" ry="22.500" fill="#c9cdd3"/><ellipse cx="105.300" cy="89.900" rx="22.600" ry="21" fill="#3e4146"/><ellipse cx="105.300" cy="91" rx="19.500" ry="18" fill="#a9adb0"/><path d="M87 93q3-17 18-18t19 14l-8 8z" fill="#8b98a2"/><path d="M89 95q6-12 14-9 12-8 18-1" stroke="#f6fafc" stroke-width="5" fill="none"/><path d="M88 98q8-7 18-4 8-2 17 0-4 14-17 14-14 0-18-10z" fill="#76593a"/><path d="M92 99q12-4 24-1" stroke="#b39064" stroke-width="3" fill="none"/></svg>
    <!-- Dictionary -->
    <svg class="app" viewBox="0 0 139 162"><path d="M33 124l3 10.500 78-12q4-1 4-9z" fill="#7d2b2e"/><path d="M36 126l80-12-1 7-77 11.500z" fill="#cfc8b8"/><path d="M21 30L97 18.700q4-.5 5 4l15.300 87q.7 4-3.300 5L35 127q-3 .5-3.500-2L19 33q0-2.500 2-3z" fill="#b04a4d"/><path d="M23 31l15 95" stroke="#8f3438" stroke-width="2.500"/><path d="M28 49l78-11.500" stroke="#cf9294" stroke-width="1.200"/><g fill="#fff" font-family="Liberation Serif" transform="rotate(-7 70 70)"><text x="43" y="41" font-size="15.500" textLength="53" lengthAdjust="spacingAndGlyphs">Dictionary</text><text x="43" y="93.500" font-size="52" textLength="57" lengthAdjust="spacingAndGlyphs">Aa</text></g></svg>
    <i class="divider green"></i>
    <!-- Trash -->
    <svg class="app" viewBox="0 0 139 162"><defs><linearGradient id="tr" x2="1"><stop stop-color="#f3f5f5"/><stop offset=".12" stop-color="#dcdede"/><stop offset=".5" stop-color="#d6d8d8"/><stop offset=".85" stop-color="#dcdede"/><stop offset="1" stop-color="#f6f8f8"/></linearGradient></defs><ellipse cx="69" cy="30.500" rx="46" ry="12" fill="#c9dfd8" stroke="#f1f6f4" stroke-width="1.500"/><path d="M29 20l6-1 8-5 10-4 11 5 4 8 10-12 14 9 12-1 5 7-4 10-16 5H44l-12-7z" fill="#e6e6e6"/><path d="M32 22l18-6 12 3-6 4-14 2z" fill="#a3a3a2"/><path d="M38 31l10-3 14 7-6 6-10-2z" fill="#43302e"/><path d="M48 25l11-3 7 2-6 6z" fill="#31bde0"/><path d="M58 23l9 1-4 4z" fill="#8bd03d"/><path d="M44 26l19 7 7-9 2 17H56z" fill="#f6f6f6"/><path d="M70 23l3 10-5 8-3 0z" fill="#d9643f"/><path d="M76 20l12 3 4 7-6 11H72z" fill="#4b4a62"/><path d="M77 20l11 2-4 8z" fill="#3c6bc4"/><path d="M82 30l8 0-5 6z" fill="#e07a37"/><path d="M94 21l10 0 3 6-6 9-6-2z" fill="#989a99"/><path d="M71 16l6-7 10 8-12 5zM52 9l8 6-9 1z" fill="#fafafa"/><path d="M22.800 31Q27 42.500 69 42.500T115 31L104 124q-2 10.500-35 10.500T35 124z" fill="url(#tr)"/><path d="M57 62q24-2 36-18-4 20-22 21-9 1-14-3z" fill="#efefef" opacity=".9"/><path d="M33.500 110q1 12 35.500 12t36.500-12L104 124q-2 10.500-35 10.500T35 124z" fill="#f4f5f5"/></svg>
  </footer>
</div>
<script src="fit.js"></script>
</body>
</html>
```
FILE: styles.css
```css
* { box-sizing: border-box; }
body { margin: 0; font-family: "Inter", "Noto Sans", sans-serif; }
p, h2 { margin: 0; }
svg { flex: none; display: block; }
[data-width] { display: inline-block; white-space: pre; }

.desktop {
  position: relative;
  width: 2880px;
  height: 1800px;
  overflow: hidden;
  background: linear-gradient(90deg, #bfa176 0, #c4a87c 120px, #14161c 2400px, #16181d 2490px, #5f8f80 2530px, #78b39c 2770px, #8fb59b 2830px, #b0b096 2880px);
}
.grain { position: absolute; left: 0; bottom: 0; }

/* Menu bar */
.menubar {
  position: relative;
  height: 44px;
  display: flex;
  justify-content: space-between;
  padding-left: 42px;
  background: linear-gradient(90deg, #edeae7 0, #ece7e4 350px, #d3cdcd 430px, #c8c2c3 490px, #cfcaca 550px, #e8e4e1 610px, #ece9e4 800px, #ecdedb 920px, #ebd6d5 1000px, #e9bdcb 1070px, #eabdcc 1130px, #d8c8cc 1230px, #c6dbd6 1330px, #c2dbd4 1560px, #dfe0da 1640px, #ece7e3 1740px, #ece6de 1890px, #ead9c9 1990px, #ecdcc2 2100px, #ecdcc2 2220px, #cdc5c2 2340px, #c8c2c1 2410px, #dcd7d4 2480px, #ebe6e2 2560px, #ede9e6 2880px);
  font-size: 27px;
  line-height: 45px;
  color: #35312f;
}
.apple { width: 25px; height: 32px; margin-top: 4px; }
.menus { flex: 1; padding-left: 41px; display: grid; grid-template-columns: 125px 81px 87px 100px 74px 140px 100px; }
.menus b { font-weight: 700; }
.status { display: flex; align-items: center; padding-right: 45px; }
.status svg:nth-of-type(2) { margin-left: 16px; margin-top: -2px; }
.status svg:nth-of-type(3) { margin-left: 27px; }
.clock { margin-left: 35px; }
.status svg:nth-of-type(4) { margin-left: 47px; }
.status svg:nth-of-type(5) { margin-left: 33px; }
.status svg:nth-of-type(6) { margin-left: 23px; }
.sliver { height: 12px; background: linear-gradient(90deg, #93857c 0, #756a66 390px, #16141c 405px, #16141c 550px, #8d8178 565px, #a5948c 930px, #5a2032 1040px, #571d30 1270px, #27403d 1290px, #18403d 1650px, #8d827b 1670px, #8c6e55 1920px, #4b2838 2040px, #7c6549 2080px, #8b7355 2320px, #17161c 2335px, #17161c 2490px, #877c76 2500px, #a39489 2880px); }

/* Messages window */
.messages {
  position: absolute;
  left: 0;
  top: 46px;
  width: 2880px;
  height: 1590px;
  display: flex;
  overflow: hidden;
  border-radius: 10px;
  background: #fff;
}
.sidebar { width: 542px; border-right: 2px solid #d6d6d6; }
.side-head { height: 112px; padding: 10px 0 0 16px; background: linear-gradient(#f7f7f7, #f3f3f3); border-bottom: 2px solid #d9d9d9; }
.lights { display: flex; gap: 16px; }
.lights i, .blights i { width: 24px; height: 24px; border-radius: 50%; background: #dedede; border: 1px solid #cfcfcf; }
.tools { display: flex; margin: 17px 0 0 25px; gap: 23px; }
.search { width: 386px; height: 42px; border-radius: 8px; background: #e0e0e0; border: 1px solid #cecece; display: flex; align-items: center; gap: 9px; padding-left: 11px; font-size: 24px; color: #a2a2a2; }
.compose { width: 65px; height: 42px; border-radius: 9px; background: #fff; border: 1px solid #d0d0d0; box-shadow: 0 1px 2px #bbb; display: flex; justify-content: center; align-items: center; }
.thread { height: 60px; display: flex; padding-left: 52px; background: #cbcbcb; font-size: 25px; line-height: 30px; color: #333; }
.face { width: 72px; height: 72px; border-radius: 50%; margin: 13px 31px 0 0; background: #9aa3b4; }
.who, .when { margin-top: 13px; }
.who { font-weight: 600; }
.when { margin-left: 112px; }
.conversation { flex: 1; display: flex; flex-direction: column; }
.to-bar { height: 112px; padding: 45px 28px 0 26px; display: flex; align-items: flex-start; background: linear-gradient(#f7f7f7, #f3f3f3); border-bottom: 2px solid #d9d9d9; font-size: 24px; line-height: 56px; }
.to { color: #7b7b7b; margin-top: -1px; }
.name { color: #2c2c2c; margin: 1px 0 0 16px; }
.details { color: #2f8bf7; margin: 1px 0 0 auto; }
.transcript { height: 1396px; padding-right: 34px; display: flex; flex-direction: column; align-items: flex-end; }
.bubble { position: relative; border-radius: 25px; padding: 9px 22px 7px 18px; color: #f5fbff; font-size: 25px; line-height: 32px; white-space: nowrap; }
.first { width: 1376px; height: 36px; padding-top: 0; padding-left: 17px; border-radius: 0 0 20px 20px; background: #56bdf9; }
.first p { margin-top: -2px; }
.second { width: 500px; height: 208px; margin-top: 518px; padding-left: 46px; background: linear-gradient(#41a8f8, #389bf5); }
.third { width: 267px; height: 48px; margin-top: 6px; background: #389af5; }
.fourth { width: 500px; height: 80px; margin-top: 286px; padding-left: 46px; background: linear-gradient(#2c93f6, #268af3); }
.i5 { padding-left: 6px; }
.i9 { padding-left: 9px; }
.i10 { padding-left: 10px; }
.i14 { padding-left: 14px; }
.tail { position: absolute; right: -8px; bottom: 0; width: 24px; height: 22px; }
.first .tail { fill: #56bdf9; }
.third .tail { fill: #389af5; }
.fourth .tail { fill: #268af3; }
.delivered { margin: 9px -9px 0 0; font-size: 21px; font-weight: 600; line-height: 24px; color: #8e8e93; }
.compose-bar { flex: 1; display: flex; align-items: flex-start; justify-content: flex-end; padding: 16px 25px 0 0; background: #f4f4f4; border-top: 2px solid #dcdcdc; }
.field { width: 900px; height: 48px; border: 2px solid #c6c6c6; border-radius: 24px; background: #fff; display: flex; align-items: center; justify-content: flex-end; padding-right: 2px; }
.wave { margin: 8px 0 0 25px; }

/* Browser window */
.browser {
  position: absolute;
  left: 0;
  top: 180px;
  width: 2404px;
  height: 1590px;
  border-radius: 0 10px 0 0;
  background: #fff;
  box-shadow: 0 0 0 1px rgba(0, 0, 0, .22), 0 24px 60px rgba(0, 0, 0, .32);
  overflow: hidden;
}
.tabstrip { height: 84px; display: flex; align-items: flex-end; background: #e6eaed; box-shadow: inset 0 2px #f3f5f6; }
.blights { width: 78px; height: 68px; padding-top: 15px; display: flex; gap: 16px; margin-left: -20px; }
.tab { height: 68px; display: flex; align-items: center; font-size: 24px; color: #65696d; }
.t1 { padding-left: 36px; width: 492px; }
.t2 { padding-left: 22px; width: 476px; }
.active { position: relative; width: 480px; padding-left: 24px; background: #fff; border-radius: 16px 16px 0 0; color: #5b5f63; }
.active::before, .active::after { content: ""; position: absolute; bottom: 0; width: 16px; height: 16px; }
.active::before { left: -16px; background: radial-gradient(circle at 0 0, transparent 15.500px, #fff 16px); }
.active::after { right: -16px; background: radial-gradient(circle at 100% 0, transparent 15.500px, #fff 16px); }
.fav { width: 32px; height: 32px; }
.title { width: 352px; margin-left: 16px; overflow: hidden; line-height: 38px; -webkit-mask-image: linear-gradient(90deg, #000 315px, transparent 352px); mask-image: linear-gradient(90deg, #000 315px, transparent 352px); }
.x { width: 17px; height: 17px; margin-left: 15px; fill: none; stroke: #5f6368; stroke-width: 2.800; }
.sep { width: 2px; height: 40px; margin: 0 0 13px -2px; background: #909498; }
.plus { width: 24px; height: 24px; margin: 0 0 22px 32px; fill: none; stroke: #5f6368; stroke-width: 3.600; }
.toolbar { height: 74px; display: flex; align-items: center; padding: 0 0 2px 8px; border-bottom: 2px solid #dadce0; }
.reload { margin-left: 36px; }
.omnibox { width: 2058px; height: 56px; margin-left: 30px; padding: 0 21px 0 28px; border-radius: 28px; background: #f1f3f4; display: flex; align-items: center; }
.url { flex: 1; margin-left: 23px; padding-top: 2px; font-size: 28px; line-height: 56px; color: #6a6d70; white-space: nowrap; }
.host { color: #1f2124; }
.puzzle { margin-left: 29px; }
.avatar { margin-left: 27px; }
.dots3 { margin-left: 39px; }

/* Page */
.page { height: 1432px; padding-left: 159px; overflow: hidden; font-family: "Roboto", sans-serif; font-size: 29px; line-height: 40px; color: #636363; -webkit-text-stroke: .25px; }
.authors { margin: -14px 0 0 1px; height: 40px; display: grid; grid-template-columns: 339px 339px 338px 339px 346px 300px; white-space: nowrap; }
.authors a { color: #0f74b6; }
.pager { margin: 33px 0 0 943px; display: flex; gap: 30px; }
.pager i { width: 18px; height: 18px; border-radius: 50%; background: #b9b9b9; }
.pager .on { background: #0c0c0c; }
h2 { margin: 81px 0 33px; font-size: 41px; line-height: 48px; font-weight: 700; color: #151515; }
.summary { display: flex; flex-direction: column; gap: 28px; }
.summary p { display: flex; flex-direction: column; align-items: flex-start; }

/* Dock */
.dock {
  position: absolute;
  left: 118px;
  top: 1638px;
  width: 2644px;
  height: 180px;
  padding-left: 7px;
  display: flex;
  border-radius: 11px 11px 0 0;
  background:
    linear-gradient(90deg, transparent 2130px, rgba(120, 130, 134, .3) 2220px, rgba(122, 166, 156, .72) 2320px, #7ec2af 2410px, #86c8b2 2520px),
    linear-gradient(rgba(246, 246, 246, 1) 0, rgba(244, 243, 242, .7) 70px, rgba(243, 242, 240, 0) 162px),
    linear-gradient(90deg, #e4d5c0 0, #e2d0bd 300px, #bfbcbd 440px, #c4c0c0 530px, #e8ddd2 610px, #ece8e0 900px, #efe9e1 1250px, #f1dbda 1400px, #f1cfd3 1500px, #ece8e0 1680px, #eee6de 1900px, #d4cfcc 2080px, #bfbdbf 2200px, #9dbcae 2330px, #86c8b2 2400px);
  box-shadow: 0 0 0 1px rgba(0, 0, 0, .16), 0 0 90px rgba(0, 0, 0, .2);
}
.app { width: 139.100px; height: 162px; overflow: visible; filter: drop-shadow(0 2px 1.500px rgba(0, 0, 0, .3)); }
.petals rect { mix-blend-mode: multiply; opacity: .95; }
.run { fill: #655b50; }
.divider { width: 2px; height: 118px; margin: 22px 30px 0 30px; background: #b9b7b6; }
.green { background: #4f9480; }
```
FILE: fit.js
```js
// Adjusts the tracking of each marked run so it fills its set measure.
document.fonts.ready.then(() => {
  document.querySelectorAll('[data-width]').forEach((el) => {
    const target = Number(el.dataset.width);
    const count = el.textContent.length;
    const natural = el.getBoundingClientRect().width;
    el.style.letterSpacing = (target - natural) / count + 'px';
  });
});
```
